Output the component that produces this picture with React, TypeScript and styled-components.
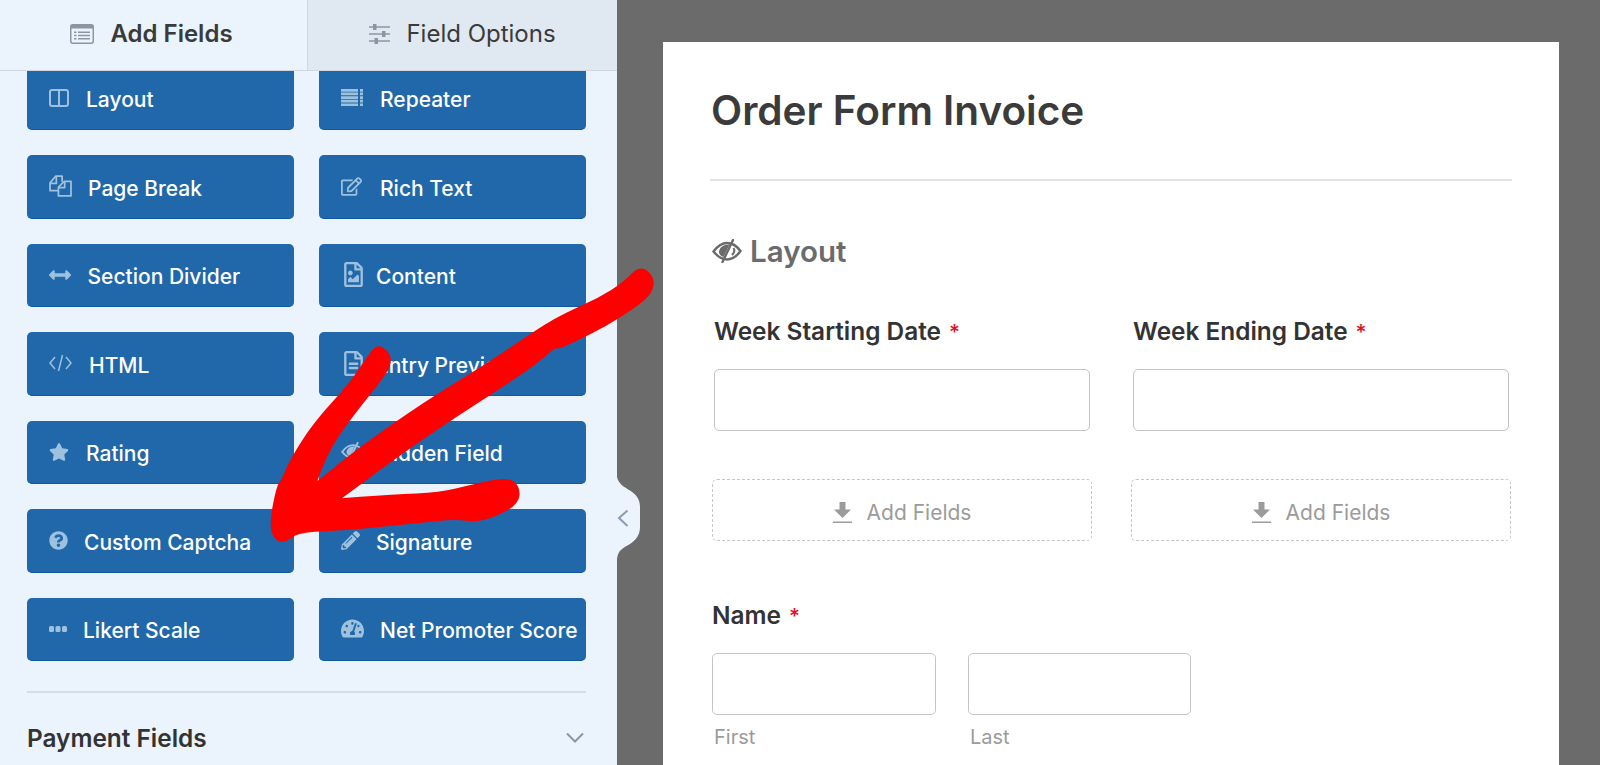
import React from "react";
import styled, { createGlobalStyle } from "styled-components";
import {
  FaArrowsAltH,
  FaPencilAlt,
  FaQuestionCircle,
  FaRegEdit,
  FaRegFileAlt,
  FaRegFileImage,
  FaStar,
  FaTachometerAlt,
} from "react-icons/fa";

const GlobalStyle = createGlobalStyle`
  html, body {
    margin: 0;
    padding: 0;
    overflow: hidden;
    background: #6b6b6b;
  }
  * {
    box-sizing: border-box;
  }
`;

const Page = styled.div`
  position: relative;
  display: flex;
  width: 1600px;
  height: 765px;
  overflow: hidden;
  font-family: Inter, "Liberation Sans", sans-serif;
`;

const Sidebar = styled.aside`
  position: relative;
  display: flex;
  flex-direction: column;
  flex: 0 0 617px;
  background: #ebf3fc;
`;

const Tabs = styled.div`
  position: relative;
  z-index: 1;
  display: flex;
  flex: 0 0 71px;
  border-bottom: 1px solid #ced7e0;
`;

const Tab = styled.div<{ $active?: boolean }>`
  display: flex;
  align-items: center;
  justify-content: center;
  gap: 16px;
  flex: ${(p) => (p.$active ? "0 0 308px" : "1")};
  padding-bottom: 3px;
  padding-right: ${(p) => (p.$active ? "4px" : "0")};
  font-size: 24px;
  font-weight: ${(p) => (p.$active ? 600 : 400)};
  color: #3a3a3a;
  background: ${(p) => (p.$active ? "#ebf3fc" : "#e0e8f1")};
  border-right: ${(p) => (p.$active ? "1px solid #ced7e0" : "none")};
`;

const TabIcon = styled.svg`
  color: #8b96a5;
  flex: none;
`;

const FieldScroller = styled.div`
  flex: 1;
  overflow: hidden;
  padding: 0 31px 0 27px;
`;

const FieldGrid = styled.div`
  display: grid;
  grid-template-columns: 267px 267px;
  grid-auto-rows: 63.5px;
  column-gap: 25px;
  row-gap: 25px;
  margin-top: -4.5px;
`;

const FieldButton = styled.div`
  display: flex;
  align-items: center;
  padding: 4px 0 0 22px;
  background: #2068a9;
  border-bottom: 1px solid #0e58a2;
  border-radius: 5px;
  color: #fff;
  font-size: 21px;
  font-weight: 500;
  white-space: nowrap;
  overflow: hidden;
`;

const IconSlot = styled.span<{ $slot: number; $h: number }>`
  display: flex;
  align-items: center;
  flex: 0 0 ${(p) => p.$slot}px;
  margin-top: -4px;
  color: #9dc1de;

  svg {
    height: ${(p) => p.$h}px;
    width: auto;
    display: block;
  }
`;

const Divider = styled.div`
  height: 2px;
  margin-top: 30px;
  background: #d4dee9;
`;

const GroupHeader = styled.div`
  display: flex;
  align-items: center;
  justify-content: space-between;
  height: 32px;
  margin-top: 29px;
  font-size: 24.400px;
  font-weight: 600;
  color: #333;
`;

const ChevronDown = styled.svg`
  color: #8b96a5;
  margin-right: 1px;
`;

const CollapseTab = styled.div`
  position: absolute;
  z-index: 2;
  left: 617px;
  top: 469px;
  width: 25px;
  height: 98px;
`;

const Canvas = styled.main`
  flex: 1;
  padding: 42px 41px 0 46px;
  overflow: hidden;
`;

const FormCard = styled.div`
  height: 760px;
  padding: 0 47px;
  background: #fff;
  overflow: hidden;
`;

const TitleBlock = styled.div`
  padding: 44px 0 43px 1px;
  border-bottom: 2px solid #e2e2e2;
`;

const Title = styled.h1`
  margin: 0;
  font-size: 40.500px;
  line-height: 50px;
  font-weight: 600;
  color: #3b3b3b;
`;

const FormBody = styled.div`
  padding: 0 2px;
`;

const SectionHead = styled.div`
  display: flex;
  align-items: center;
  gap: 8px;
  height: 36px;
  margin-top: 52px;
  font-size: 29.500px;
  font-weight: 600;
  color: #6b6b6b;
`;

const TwoCols = styled.div`
  display: grid;
  grid-template-columns: 380px 380px;
  column-gap: 39px;
`;

const FieldCell = styled.div`
  padding: 0 2px;
`;

const Label = styled.div<{ $top: number }>`
  height: 28px;
  margin-top: ${(p) => p.$top}px;
  font-size: 24.400px;
  line-height: 28px;
  font-weight: 600;
  color: #333;
`;

const Required = styled.span`
  margin-left: 8px;
  font-size: 21px;
  font-weight: 500;
  color: #e2101b;
`;

const Input = styled.div`
  height: 62px;
  margin-top: 24px;
  background: #fff;
  border: 1.5px solid #c4c4c4;
  border-radius: 5px;
`;

const DropZones = styled(TwoCols)`
  margin-top: 48px;
`;

const DropZone = styled.div`
  display: flex;
  align-items: center;
  justify-content: center;
  gap: 15px;
  height: 62px;
  padding-top: 5px;
  border: 1.5px dashed #c6c6c6;
  border-radius: 5px;
  font-size: 21px;
  color: #9b9b9b;
`;

const NameRow = styled.div`
  display: grid;
  grid-template-columns: 224px 223px;
  column-gap: 32px;
`;

const SubLabel = styled.div`
  height: 24px;
  margin-top: 10px;
  padding-left: 2px;
  font-size: 20px;
  line-height: 24px;
  color: #9b9b9b;
`;

const Scribble = styled.svg`
  position: absolute;
  z-index: 3;
  left: 260px;
  top: 255px;
  pointer-events: none;
`;

// hand drawn arrow outline, traced from the picture at 3x
const arrowOutline: [number, number][] = [
  [1140, 45], [1168, 68], [1170, 95], [1150, 125], [1075, 178], [990, 225], [892, 272], [882, 265],
  [820, 320], [700, 400], [560, 490], [400, 600], [205, 745], [205, 745], [400, 730], [540, 725],
  [640, 700], [740, 678], [768, 700], [765, 740], [700, 775], [640, 790], [590, 780], [450, 795],
  [250, 815], [110, 820], [65, 858], [38, 820], [60, 700], [75, 680], [100, 620], [170, 510],
  [280, 390], [345, 290], [360, 283], [385, 310], [370, 350], [290, 450], [200, 570], [145, 715],
  [145, 715], [300, 590], [500, 450], [680, 340], [850, 225], [920, 185], [1020, 140], [1100, 90],
];

function smoothPath(points: [number, number][]) {
  const mid = (a: [number, number], b: [number, number]) => [(a[0] + b[0]) / 2, (a[1] + b[1]) / 2];
  const first = mid(points[points.length - 1], points[0]);
  let d = `M${first[0]} ${first[1]}`;
  points.forEach((p, i) => {
    const m = mid(p, points[(i + 1) % points.length]);
    d += ` Q${p[0]} ${p[1]} ${m[0]} ${m[1]}`;
  });
  return d + " Z";
}

const LayoutIcon = () => (
  <svg viewBox="0 0 20 18" fill="none" stroke="currentColor" strokeWidth="2">
    <rect x="1" y="1" width="18" height="16" rx="2" />
    <path d="M10 1v16" />
  </svg>
);

const RepeaterIcon = () => (
  <svg viewBox="0 0 22 17" fill="currentColor">
    <path d="M0 0h17v2.700H0zM0 3.600h17v2.700H0zM0 7.200h17v2.700H0zM0 10.800h17v2.700H0zM0 14.400h17V17H0z" />
    <path d="M19 0h3v2.700h-3zM19 3.600h3v2.700h-3zM19 7.200h3v2.700h-3zM19 10.800h3v2.700h-3zM19 14.400h3V17h-3z" />
  </svg>
);

const PagesIcon = () => (
  <svg viewBox="0 0 22 21" fill="none" stroke="currentColor" strokeWidth="1.700" strokeLinejoin="round">
    <path d="M9 15H1V7.500L6.500 1H12.500V6.500" />
    <path d="M1 8h6V1.500" />
    <path d="M9 20V11.500L14.500 6H21V20z" />
    <path d="M9 12h6V6.500" />
  </svg>
);

const CodeIcon = () => (
  <svg viewBox="0 0 23 18" fill="none" stroke="currentColor" strokeWidth="1.500">
    <path d="M6 3 1 9l5 6M17 3l5 6-5 6M13.500 1l-4 16" />
  </svg>
);

const DotsIcon = () => (
  <svg viewBox="0 0 18 6" fill="currentColor">
    <rect x="0" y="0" width="5" height="6" rx="1.500" />
    <rect x="6.500" y="0" width="5" height="6" rx="1.500" />
    <rect x="13" y="0" width="5" height="6" rx="1.500" />
  </svg>
);

const LowVisionIcon = ({ size }: { size?: number }) => (
  <svg width={size} height={size ? (size * 24) / 30 : undefined} viewBox="0 0 30 24" style={{ flex: "none" }}>
    <path
      d="M1.500 12.500C6 6.500 10.500 4 15 4C20 4 24.500 6.500 28.500 12C25 17 21 20 15.500 20.500C10 20.500 5.500 17.500 1.500 12.500Z"
      fill="none"
      stroke="currentColor"
      strokeWidth="2.400"
    />
    <path d="M21 1 10.500 23" fill="none" stroke="currentColor" strokeWidth="2.400" strokeLinecap="round" />
    <path d="M17.500 5.500C11 5.500 7 9 7 13C7 15.500 9 17 11.500 18Z" fill="currentColor" />
    <path d="M21.500 9C22.800 11 22.500 13.500 20 16" fill="none" stroke="currentColor" strokeWidth="2" />
  </svg>
);

const DownloadIcon = () => (
  <svg width="19" height="22" viewBox="0 0 19 22" fill="currentColor">
    <path d="M6.500 0h6v7.500h5.500L9.500 16 1 7.500h5.500z" />
    <path d="M0 19.500h19V21H0z" />
  </svg>
);

const fields: { name: string; icon: React.ReactNode; slot: number; h: number }[] = [
  { name: "Layout", icon: <LayoutIcon />, slot: 37, h: 18 },
  { name: "Repeater", icon: <RepeaterIcon />, slot: 39, h: 17 },
  { name: "Page Break", icon: <PagesIcon />, slot: 39, h: 22 },
  { name: "Rich Text", icon: <FaRegEdit />, slot: 39, h: 21 },
  { name: "Section Divider", icon: <FaArrowsAltH />, slot: 38.5, h: 22 },
  { name: "Content", icon: <FaRegFileImage />, slot: 35, h: 25 },
  { name: "HTML", icon: <CodeIcon />, slot: 40, h: 18 },
  { name: "Entry Preview", icon: <FaRegFileAlt />, slot: 35, h: 25 },
  { name: "Rating", icon: <FaStar />, slot: 37, h: 20 },
  { name: "Hidden Field", icon: <LowVisionIcon />, slot: 36, h: 19 },
  { name: "Custom Captcha", icon: <FaQuestionCircle />, slot: 35, h: 19 },
  { name: "Signature", icon: <FaPencilAlt />, slot: 35, h: 19 },
  { name: "Likert Scale", icon: <DotsIcon />, slot: 34, h: 6 },
  { name: "Net Promoter Score", icon: <FaTachometerAlt />, slot: 39, h: 23 },
];

export default function App() {
  return (
    <Page>
      <GlobalStyle />
      <Sidebar>
        <Tabs>
          <Tab $active>
            <TabIcon width="24" height="20" viewBox="0 0 24 20">
              <rect x="0.750" y="0.750" width="22.500" height="18.500" rx="2" fill="none" stroke="currentColor" strokeWidth="1.500" />
              <path d="M1 1h22v3.500H1z" fill="currentColor" />
              <path d="M4 7.500h2.500V9H4zM4 10.700h2.500v1.600H4zM4 14h2.500v1.600H4zM8 7.500h12V9H8zM8 10.700h12v1.600H8zM8 14h12v1.600H8z" fill="currentColor" />
            </TabIcon>
            Add Fields
          </Tab>
          <Tab>
            <TabIcon width="21" height="20" viewBox="0 0 21 20" fill="currentColor">
              <path d="M0 2.200h21v1.500H0zM0 9.200h21v1.500H0zM0 16.300h21v1.500H0z" />
              <path d="M4 0h3.500v6H4zM13 7h3.500v6H13zM5.500 14H9v6H5.500z" />
            </TabIcon>
            Field Options
          </Tab>
        </Tabs>
        <FieldScroller>
          <FieldGrid>
            {fields.map((f) => (
              <FieldButton key={f.name}>
                <IconSlot $slot={f.slot} $h={f.h}>
                  {f.icon}
                </IconSlot>
                {f.name}
              </FieldButton>
            ))}
          </FieldGrid>
          <Divider />
          <GroupHeader>
            Payment Fields
            <ChevronDown width="20" height="12" viewBox="0 0 20 12" fill="none" stroke="currentColor" strokeWidth="2">
              <path d="M2 1.500l8 8 8-8" />
            </ChevronDown>
          </GroupHeader>
        </FieldScroller>
      </Sidebar>

      <CollapseTab>
        <svg width="25" height="98" viewBox="0 0 25 98">
          <path
            d="M0 8C2 16 8 18 12 21C19 25 23 30 23 38V58C23 66 19 71 13 75C6 79 1 81 0 90Z"
            fill="#ebf3fc"
          />
          <path d="M10.500 41.500L2 49l8.500 8" fill="none" stroke="#8b9bb0" strokeWidth="2" />
        </svg>
      </CollapseTab>

      <Canvas>
        <FormCard>
          <TitleBlock>
            <Title>Order Form Invoice</Title>
          </TitleBlock>
          <FormBody>
            <SectionHead>
              <LowVisionIcon size={30} />
              Layout
            </SectionHead>
            <TwoCols>
              <FieldCell>
                <Label $top={48}>
                  Week Starting Date<Required>*</Required>
                </Label>
                <Input />
              </FieldCell>
              <FieldCell>
                <Label $top={48}>
                  Week Ending Date<Required>*</Required>
                </Label>
                <Input />
              </FieldCell>
            </TwoCols>
            <DropZones>
              <DropZone>
                <DownloadIcon />
                Add Fields
              </DropZone>
              <DropZone>
                <DownloadIcon />
                Add Fields
              </DropZone>
            </DropZones>
            <Label $top={60}>
              Name<Required>*</Required>
            </Label>
            <NameRow>
              <div>
                <Input />
                <SubLabel>First</SubLabel>
              </div>
              <div>
                <Input />
                <SubLabel>Last</SubLabel>
              </div>
            </NameRow>
          </FormBody>
        </FormCard>
      </Canvas>

      <Scribble width="400" height="300" viewBox="0 0 1200 900">
        <path d={smoothPath(arrowOutline)} fill="#fe0000" stroke="#fe0000" strokeWidth="24" strokeLinejoin="round" />
      </Scribble>
    </Page>
  );
}
